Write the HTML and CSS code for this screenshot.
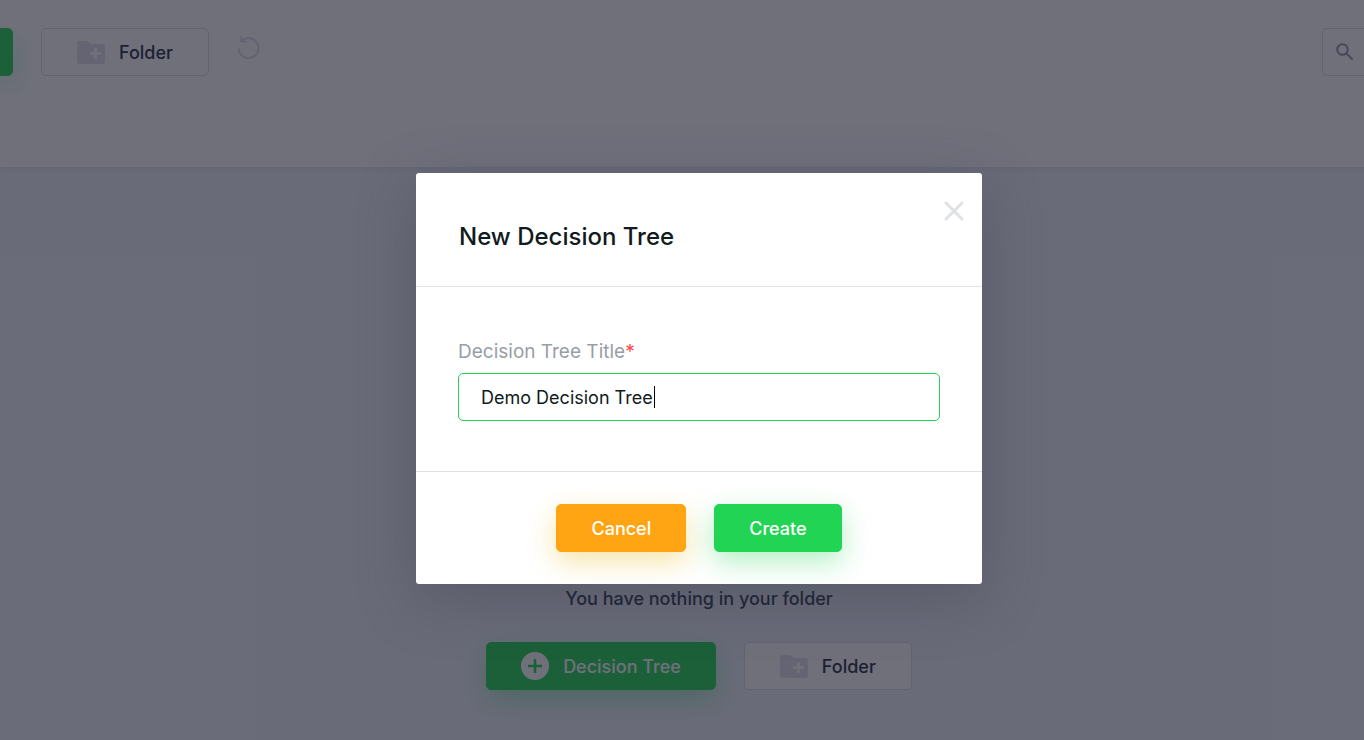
FILE: index.html
```html
<!DOCTYPE html>
<html lang="en">
<head>
  <meta charset="UTF-8" />
  <meta name="viewport" content="width=device-width, initial-scale=1" />
  <title>New Decision Tree</title>
  <link rel="stylesheet" href="styles.css">
</head>
<body>

  <!-- Shared icons -->
  <svg class="icon-defs" aria-hidden="true">
    <symbol id="icon-folder" viewBox="0 0 28 23">
      <path fill-rule="evenodd" d="M3 0H10L14 3H25Q28 3 28 6V20Q28 23 25 23H3Q0 23 0 20V3Q0 0 3 0ZM17 7V11H13V14H17V18H20V14H24V11H20V7Z" />
    </symbol>
    <symbol id="icon-plus" viewBox="0 0 28 28">
      <path fill-rule="evenodd" d="M14 0A14 14 0 1 1 14 28A14 14 0 1 1 14 0ZM12.7 7V12.7H7V15.3H12.7V21H15.3V15.3H21V12.7H15.3V7Z" />
    </symbol>
  </svg>

  <div class="app">
    <header class="toolbar">
      <button class="btn btn-green btn-edge" aria-label="New decision tree"></button>
      <button class="btn btn-outline">
        <svg class="icon-folder"><use href="#icon-folder" /></svg>
        Folder
      </button>
      <button class="btn-reset" aria-label="Reset">
        <svg viewBox="0 0 24 24">
          <path d="M1.500 12A10 10 0 1 0 5 4.500Q8.500 1.800 12 2M4.500 .5L4 5.200L9.500 6" />
        </svg>
      </button>
      <label class="search">
        <svg viewBox="0 0 18 18"><circle cx="6.500" cy="6.500" r="5.300" /><path d="M10.500 10.500L16.500 16.500" /></svg>
        <input type="search" aria-label="Search" />
      </label>
    </header>

    <main class="content">
      <p>You have nothing in your folder</p>
      <div class="actions">
        <button class="btn btn-green">
          <svg class="icon-plus"><use href="#icon-plus" /></svg>
          Decision Tree
        </button>
        <button class="btn btn-outline">
          <svg class="icon-folder"><use href="#icon-folder" /></svg>
          Folder
        </button>
      </div>
    </main>

    <!-- Modal -->
    <div class="overlay">
      <form class="modal" role="dialog" aria-labelledby="modalTitle">
        <div class="modal-header">
          <h2 id="modalTitle">New Decision Tree</h2>
          <button type="button" class="modal-close" aria-label="Close">
            <svg viewBox="0 0 20 20"><path d="M2 2L18 18M18 2L2 18" /></svg>
          </button>
        </div>
        <div class="modal-body">
          <label for="treeTitle">Decision Tree Title<span class="required">*</span></label>
          <div class="field">
            <input type="text" id="treeTitle" value="Demo Decision Tree" required />
            <span class="caret"></span>
          </div>
        </div>
        <div class="modal-footer">
          <button type="button" class="btn btn-orange">Cancel</button>
          <button type="submit" class="btn btn-green">Create</button>
        </div>
      </form>
    </div>
  </div>

</body>
</html>
```

FILE: styles.css
```css
* {
  margin: 0;
  padding: 0;
  box-sizing: border-box;
  font-family: Inter, sans-serif;
}

body {
  min-height: 100vh;
  background: #eef2f9;
  color: #242f40;
  font-size: 18px;
  overflow: hidden;
}

.icon-defs {
  position: absolute;
  width: 0;
  height: 0;
}

/* Page runs past the right edge of the window */
.app {
  position: relative;
  display: flex;
  flex-direction: column;
  width: calc(100% + 34px);
  min-height: 100vh;
}

/* Buttons */
.btn {
  display: flex;
  align-items: center;
  justify-content: center;
  gap: 14px;
  height: 48px;
  padding: 0 34px;
  border: 1px solid transparent;
  border-radius: 5px;
  font-size: 18px;
  font-weight: 500;
  color: #fff;
  white-space: nowrap;
  cursor: pointer;
}
.btn-green {
  background: #21d453;
  border-color: #21d453;
  box-shadow: 0 10px 28px rgba(33, 212, 83, 0.35);
}
.btn-orange {
  background: #ffa514;
  border-color: #ffa514;
  box-shadow: 0 10px 28px rgba(235, 190, 40, 0.4);
}
.btn-outline {
  padding: 0 35px;
  background: #fff;
  border-color: #d9dae6;
  color: #242f40;
}
.btn-edge {
  width: 13px;
  padding: 0;
  border-radius: 0 5px 5px 0;
}
.icon-plus {
  width: 28px;
  height: 28px;
  fill: currentColor;
}
.icon-folder {
  width: 28px;
  height: 23px;
  fill: #dfe0e8;
}

/* Toolbar */
.toolbar {
  display: flex;
  gap: 28px;
  height: 167px;
  padding-top: 28px;
  background: #fff;
  box-shadow: 0 2px 6px rgba(40, 40, 80, 0.08);
}
.btn-reset {
  width: 24px;
  height: 24px;
  margin-top: 8px;
  border: none;
  background: transparent;
  cursor: pointer;
}
.btn-reset svg {
  display: block;
  fill: none;
  stroke: #dcdde6;
  stroke-width: 2;
}
.search {
  display: flex;
  align-items: center;
  gap: 14px;
  width: 76px;
  height: 48px;
  margin-left: auto;
  padding-left: 13px;
  border: 1px solid #d9dae6;
  border-right: none;
  border-radius: 5px 0 0 5px;
}
.search svg {
  flex: none;
  width: 18px;
  height: 18px;
  fill: none;
  stroke: #9293a0;
  stroke-width: 2;
}
.search input {
  width: 100%;
  border: none;
  background: transparent;
  outline: none;
}

/* Empty folder */
.content {
  flex: 1;
  display: flex;
  flex-direction: column;
  align-items: center;
  justify-content: flex-end;
  gap: 32px;
  padding-bottom: 50px;
  font-weight: 500;
}
.content p {
  line-height: 22px;
}
.actions {
  display: flex;
  gap: 28px;
}

/* Modal */
.overlay {
  position: absolute;
  inset: 0;
  display: flex;
  align-items: flex-start;
  justify-content: center;
  padding-top: 173px;
  background: rgba(25, 25, 42, 0.62);
}
.modal {
  width: 566px;
  max-width: 90vw;
  background: #fff;
  border-radius: 3px;
  box-shadow: 0 14px 56px rgba(60, 65, 80, 0.4);
}
.modal-header {
  position: relative;
  padding: 48px 43px 33px;
  border-bottom: 1px solid #e1e3e5;
}
.modal-header h2 {
  font-size: 24px;
  font-weight: 500;
  line-height: 32px;
  color: #101a20;
}
.modal-close {
  position: absolute;
  top: 28px;
  right: 18px;
  width: 20px;
  height: 20px;
  border: none;
  background: transparent;
  cursor: pointer;
}
.modal-close svg {
  display: block;
  stroke: #dfe1e5;
  stroke-width: 3;
  stroke-linecap: round;
}
.modal-body {
  padding: 54px 42px 50px;
  border-bottom: 1px solid #dde3e3;
}
.modal-body label {
  display: block;
  margin-bottom: 10px;
  font-size: 19px;
  line-height: 22px;
  color: #979ea5;
}
.required {
  color: #ff4545;
}
.field {
  position: relative;
}
.field input {
  display: block;
  width: 100%;
  height: 48px;
  padding: 0 22px;
  border: 1px solid #21d453;
  border-radius: 5px;
  outline: none;
  font-size: 18px;
  color: #101a20;
}
.caret {
  position: absolute;
  top: 13px;
  left: 196px;
  width: 1px;
  height: 22px;
  background: #000;
}
.modal-footer {
  display: flex;
  justify-content: center;
  gap: 28px;
  padding: 32px 43px;
}
```
